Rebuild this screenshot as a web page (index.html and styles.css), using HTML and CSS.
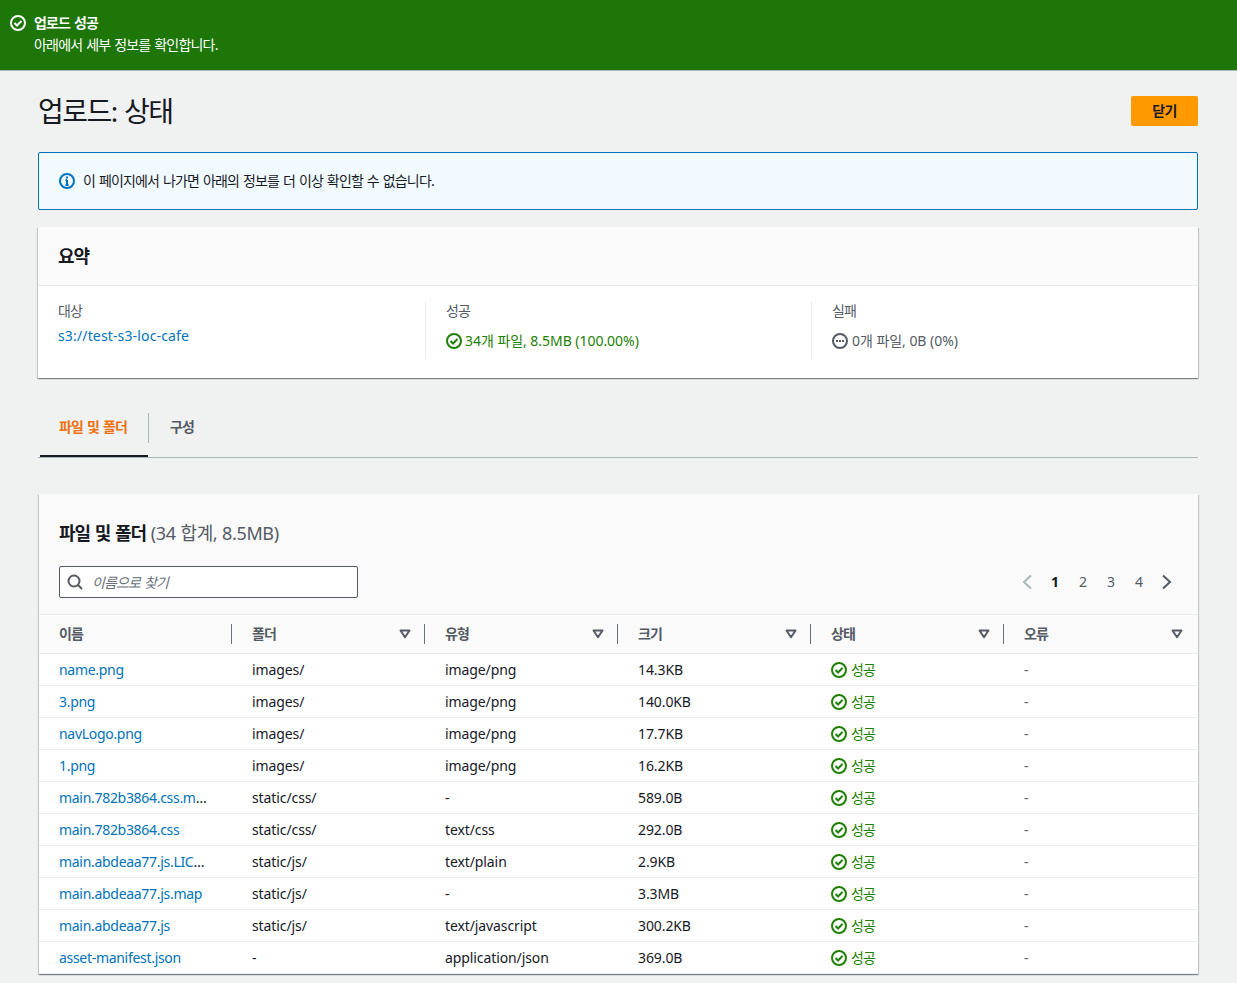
FILE: index.html
```html
<!DOCTYPE html>
<html lang="ko">
<head>
<meta charset="utf-8">
<title>업로드: 상태</title>
<link rel="stylesheet" href="styles.css">
</head>
<body>
<svg class="defs" width="0" height="0" aria-hidden="true">
  <symbol id="check" viewBox="0 0 16 16"><circle cx="8" cy="8" r="7" fill="none" stroke="currentColor" stroke-width="2"/><path d="M4.500 8l2.500 2.500 4.500-4.500" fill="none" stroke="currentColor" stroke-width="2"/></symbol>
  <symbol id="filter" viewBox="0 0 12 10"><path d="M1.500 1.500h9L6 8.200z" fill="none" stroke="currentColor" stroke-width="2" stroke-linejoin="round"/></symbol>
</svg>
<header class="flash">
  <svg class="flash-icon"><use href="#check"/></svg>
  <div>
    <div class="flash-title">업로드 성공</div>
    <div class="flash-text">아래에서 세부 정보를 확인합니다.</div>
  </div>
</header>
<main class="page">
  <div class="page-head">
    <h1>업로드: 상태</h1>
    <button class="btn-primary">닫기</button>
  </div>
  <div class="alert">
    <svg class="alert-icon" viewBox="0 0 16 16"><circle cx="8" cy="8" r="7" fill="none" stroke="currentColor" stroke-width="2"/><path d="M8 7v5M6.500 12h3M6.500 7H8" fill="none" stroke="currentColor" stroke-width="2"/><rect x="7" y="3.500" width="2" height="2" fill="currentColor"/></svg>
    <span class="alert-text">이 페이지에서 나가면 아래의 정보를 더 이상 확인할 수 없습니다.</span>
  </div>
  <section class="card summary">
    <h2 class="summary-head">요약</h2>
    <div class="summary-body">
      <div class="col">
        <div class="label">대상</div>
        <a class="dest">s3://test-s3-loc-cafe</a>
      </div>
      <div class="col">
        <div class="label">성공</div>
        <div class="stat ok"><svg class="ico"><use href="#check"/></svg>34개 파일, 8.5MB (100.00%)</div>
      </div>
      <div class="col">
        <div class="label">실패</div>
        <div class="stat muted"><svg class="ico" viewBox="0 0 16 16"><circle cx="8" cy="8" r="7" fill="none" stroke="currentColor" stroke-width="2"/><path d="M4 7h2v2H4zM7 7h2v2H7zM10 7h2v2h-2z" fill="currentColor"/></svg>0개 파일, 0B (0%)</div>
      </div>
    </div>
  </section>
  <nav class="tabs">
    <div class="tab active">파일 및 폴더</div>
    <div class="tab">구성</div>
  </nav>
  <section class="card files">
    <div class="files-head">
      <h2 class="files-title">파일 및 폴더 <span class="count">(34 합계, 8.5MB)</span></h2>
      <div class="tools">
        <div class="search">
          <svg class="search-icon" viewBox="0 0 16 16"><circle cx="7" cy="7" r="5.500" fill="none" stroke="currentColor" stroke-width="2"/><path d="M11 11l4 4" fill="none" stroke="currentColor" stroke-width="2"/></svg>
          <span class="placeholder">이름으로 찾기</span>
        </div>
        <div class="pager">
          <svg class="chev off" viewBox="0 0 12 16"><path d="M10 1.500L3 8l7 6.500" fill="none" stroke="currentColor" stroke-width="2"/></svg>
          <span class="pg cur">1</span><span class="pg">2</span><span class="pg">3</span><span class="pg">4</span>
          <svg class="chev" viewBox="0 0 12 16"><path d="M2 1.500L9 8l-7 6.500" fill="none" stroke="currentColor" stroke-width="2"/></svg>
        </div>
      </div>
    </div>
    <table>
      <thead>
        <tr>
          <th><div class="th"><span class="th-l">이름</span><i class="sep"></i></div></th>
          <th><div class="th"><span class="th-l">폴더</span><svg class="flt"><use href="#filter"/></svg><i class="sep"></i></div></th>
          <th><div class="th"><span class="th-l">유형</span><svg class="flt"><use href="#filter"/></svg><i class="sep"></i></div></th>
          <th><div class="th"><span class="th-l">크기</span><svg class="flt"><use href="#filter"/></svg><i class="sep"></i></div></th>
          <th><div class="th"><span class="th-l">상태</span><svg class="flt"><use href="#filter"/></svg><i class="sep"></i></div></th>
          <th class="last"><div class="th"><span class="th-l">오류</span><svg class="flt"><use href="#filter"/></svg></div></th>
        </tr>
      </thead>
      <tbody>
        <tr><td><a class="link">name.png</a></td><td>images/</td><td>image/png</td><td>14.3KB</td><td><span class="st"><svg class="ico"><use href="#check"/></svg>성공</span></td><td class="dash">-</td></tr>
        <tr><td><a class="link">3.png</a></td><td>images/</td><td>image/png</td><td>140.0KB</td><td><span class="st"><svg class="ico"><use href="#check"/></svg>성공</span></td><td class="dash">-</td></tr>
        <tr><td><a class="link">navLogo.png</a></td><td>images/</td><td>image/png</td><td>17.7KB</td><td><span class="st"><svg class="ico"><use href="#check"/></svg>성공</span></td><td class="dash">-</td></tr>
        <tr><td><a class="link">1.png</a></td><td>images/</td><td>image/png</td><td>16.2KB</td><td><span class="st"><svg class="ico"><use href="#check"/></svg>성공</span></td><td class="dash">-</td></tr>
        <tr><td><a class="link">main.782b3864.css.map</a></td><td>static/css/</td><td>-</td><td>589.0B</td><td><span class="st"><svg class="ico"><use href="#check"/></svg>성공</span></td><td class="dash">-</td></tr>
        <tr><td><a class="link">main.782b3864.css</a></td><td>static/css/</td><td>text/css</td><td>292.0B</td><td><span class="st"><svg class="ico"><use href="#check"/></svg>성공</span></td><td class="dash">-</td></tr>
        <tr><td><a class="link">main.abdeaa77.js.LICENSE.txt</a></td><td>static/js/</td><td>text/plain</td><td>2.9KB</td><td><span class="st"><svg class="ico"><use href="#check"/></svg>성공</span></td><td class="dash">-</td></tr>
        <tr><td><a class="link">main.abdeaa77.js.map</a></td><td>static/js/</td><td>-</td><td>3.3MB</td><td><span class="st"><svg class="ico"><use href="#check"/></svg>성공</span></td><td class="dash">-</td></tr>
        <tr><td><a class="link">main.abdeaa77.js</a></td><td>static/js/</td><td>text/javascript</td><td>300.2KB</td><td><span class="st"><svg class="ico"><use href="#check"/></svg>성공</span></td><td class="dash">-</td></tr>
        <tr><td><a class="link">asset-manifest.json</a></td><td>-</td><td>application/json</td><td>369.0B</td><td><span class="st"><svg class="ico"><use href="#check"/></svg>성공</span></td><td class="dash">-</td></tr>
      </tbody>
    </table>
  </section>
</main>
</body>
</html>
```
FILE: styles.css
```css
* { box-sizing: border-box; }
html, body { margin: 0; padding: 0; }
body {
  background: #f0f1f1;
  color: #16191f;
  font-family: "Noto Sans", "Noto Sans CJK KR", sans-serif;
  font-size: 14px;
  line-height: 20px;
  height: 983px;
  overflow: hidden;
}
.defs { position: absolute; }
.flash {
  height: 71px;
  background: #1d7607;
  border-bottom: 1px solid #aab7b8;
  color: #fff;
  display: flex;
  gap: 8px;
  padding: 13px 10px 0;
}
.flash-icon { width: 16px; height: 16px; margin-top: 2px; }
.flash-title { font-weight: 700; height: 20px; letter-spacing: -0.85px; word-spacing: 1px; }
.flash-text { margin-top: 2px; letter-spacing: -0.8px; word-spacing: 1px; }
.page { padding: 0 39px 0 38px; }
.page-head {
  display: flex;
  justify-content: space-between;
  align-items: center;
  height: 81px;
  padding-bottom: 1px;
}
h1 { margin: 0; font-size: 28px; line-height: 28px; font-weight: 400; color: #16191f; letter-spacing: -1.5px; word-spacing: 1.5px; }
.btn-primary {
  width: 67px;
  height: 30px;
  background: #ff9900;
  border: 0;
  border-radius: 2px;
  font: 700 14px/20px "Noto Sans", "Noto Sans CJK KR", sans-serif;
  color: #16191f;
  padding: 0;
  letter-spacing: -0.6px;
}
.alert {
  height: 58px;
  background: #f1faff;
  border: 1px solid #0073bb;
  border-radius: 2px;
  display: flex;
  align-items: center;
  gap: 8px;
  padding-left: 20px;
}
.alert-icon { width: 16px; height: 16px; color: #0073bb; }
.alert-text { letter-spacing: -0.82px; word-spacing: 1px; }
.card {
  background: #fff;
  box-shadow: 0 1px 1px 0 rgba(0,28,36,.3), 1px 1px 1px 0 rgba(0,28,36,.15), -1px 1px 1px 0 rgba(0,28,36,.15);
}
.summary { margin-top: 17px; height: 151px; }
.summary-head {
  margin: 0;
  height: 59px;
  padding: 0 20px;
  background: #fafafa;
  border-bottom: 1px solid #eaeded;
  font-size: 18px;
  line-height: 58px;
  font-weight: 700;
  letter-spacing: -1px;
}
.summary-body { display: grid; grid-template-columns: 387px 386px 1fr; padding-top: 15px; }
.col { height: 58px; padding-left: 20px; border-left: 1px solid #eaeded; }
.col:first-child { border-left: 0; }
.label { color: #545b64; margin-bottom: 6px; letter-spacing: -0.8px; }
.link { color: #0073bb; letter-spacing: -0.3px; }
.dest { display: block; margin-top: -1px; color: #0073bb; letter-spacing: 0.15px; }
.stat { display: flex; align-items: center; gap: 3px; margin-top: 10px; letter-spacing: -0.04px; }
.ok { color: #1d8102; }
.muted { color: #545b64; gap: 4px; }
.ico { width: 16px; height: 16px; flex: none; }
.tabs {
  margin-top: 20px;
  height: 60px;
  border-bottom: 1px solid #aab7b8;
  display: flex;
  padding-left: 2px;
}
.tab {
  height: 59px;
  padding: 19px 21px 0 22px;
  font-weight: 700;
  color: #545b64;
  position: relative;
  white-space: nowrap;
  letter-spacing: -0.8px;
  word-spacing: 1px;
}
.tab.active { width: 108px; color: #ec7211; padding-left: 19px; border-bottom: 2px solid #16191f; }
.tab.active::after { content: ""; position: absolute; right: -1px; top: 15px; height: 30px; width: 1px; background: #aab7b8; }
.files { margin-top: 36px; margin-left: 1px; }
.files-head { background: #fafafa; height: 121px; padding: 28px 20px 0; border-bottom: 1px solid #eaeded; }
.files-title { margin: 0; font-size: 18px; line-height: 22px; font-weight: 700; letter-spacing: -1px; word-spacing: 1px; }
.count { font-weight: 400; color: #545b64; letter-spacing: -0.38px; word-spacing: 0.5px; }
.tools { display: flex; justify-content: space-between; align-items: center; margin-top: 22px; }
.search {
  width: 299px;
  height: 32px;
  background: #fff;
  border: 1px solid #545b64;
  border-radius: 2px;
  display: flex;
  align-items: center;
  gap: 9px;
  padding-left: 7px;
}
.search-icon { width: 16px; height: 16px; color: #545b64; }
.placeholder { font-style: italic; color: #687078; letter-spacing: -0.85px; word-spacing: 1px; padding-top: 1px; }
.pager { display: flex; align-items: center; margin-right: -3px; color: #545b64; }
.pg { width: 28px; text-align: center; }
.pg.cur { font-weight: 700; color: #16191f; }
.chev { width: 12px; height: 16px; margin: 0 8px; color: #545b64; }
.chev.off { color: #aab7b8; }
table { width: 100%; table-layout: fixed; border-collapse: separate; border-spacing: 0; background: #fff; }
th, td { width: 193px; padding: 0; text-align: left; }
th { height: 39px; background: #fafafa; border-bottom: 1px solid #eaeded; }
th.last { width: auto; }
.th { display: flex; align-items: center; padding-left: 20px; height: 20px; font-weight: 700; color: #545b64; }
.th-l { flex: 1; letter-spacing: -0.9px; }
.flt { width: 12px; height: 10px; color: #545b64; }
.sep { width: 1px; height: 20px; background: #687078; margin-left: 13px; }
.last .th { padding-right: 15px; }
td { padding-left: 20px; height: 32px; color: #16191f; white-space: nowrap; overflow: hidden; text-overflow: ellipsis; letter-spacing: -0.1px; border-bottom: 1px solid #eaeded; }
td:first-child { padding-right: 22px; }
.st { display: inline-flex; align-items: center; gap: 4px; color: #1d8102; letter-spacing: -1px; vertical-align: top; }
.dash { color: #545b64; }
```
